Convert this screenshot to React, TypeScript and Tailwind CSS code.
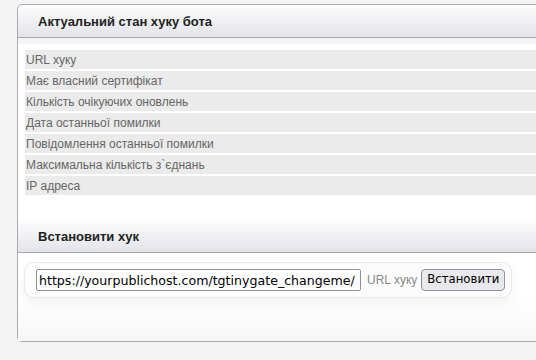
const rows = [
  'URL хуку',
  'Має власний сертифікат',
  'Кількість очікуючих оновлень',
  'Дата останньої помилки',
  'Повідомлення останньої помилки',
  'Максимальна кількість з`єднань',
  'IP адреса',
];

const headerClass =
  'flex h-[33px] items-center border-b border-[#a4a7af] bg-gradient-to-b from-[#fdfdfe] to-[#e3e4e8] pt-[1px] pl-[20px] text-[13px] font-bold text-[#222]';

export default function App() {
  return (
    <div className="h-[360px] w-[536px] overflow-hidden bg-[#f4f4f4] pt-[4px] pl-[17px] font-['Liberation_Sans',Arial,sans-serif]">
      <div className="flex h-[338px] w-[560px] flex-col rounded-[5px] border border-[#a9abb2] bg-white">
        <div className={`${headerClass} rounded-t-[5px]`}>Актуальний стан хуку бота</div>
        <div className="h-[6px] bg-[#f4f4f6]" />
        <div className="mt-[6px] ml-[7px] flex flex-col gap-[2px]">
          {rows.map((r) => (
            <div key={r} className="flex h-[19px] items-center bg-[#ebebeb] pl-[1px] text-[12px] text-[#666]">
              {r}
            </div>
          ))}
        </div>

        <div className={`mt-[25px] ${headerClass}`}>Встановити хук</div>

        <div className="flex-1 bg-gradient-to-b from-white via-white to-[#f7f7f7] pt-[9px] pl-[6px]">
          <div className="flex h-[36px] w-[488px] items-center whitespace-nowrap rounded-[10px] border border-[#e8e8e8] bg-[#fcfcfc] pl-[11px] shadow-[0_6px_14px_rgba(0,0,0,0.05)]">
            <input
              className="h-[22px] w-[325px] shrink-0 rounded-[2px] border border-[#8f8f9d] bg-white px-[2px] font-['DejaVu_Sans',sans-serif] text-[12.6px] text-black outline-none"
              defaultValue="https://yourpublichost.com/tgtinygate_changeme/"
              readOnly
            />
            <span className="ml-[6px] shrink-0 text-[12px] text-[#888]">URL хуку</span>
            <button className="ml-[4px] h-[22px] shrink-0 rounded-[4px] border border-[#8f8f9d] bg-[#e9e9ed] px-[5px] font-['DejaVu_Sans',sans-serif] text-[11.7px] text-black">
              Встановити
            </button>
          </div>
        </div>
      </div>
    </div>
  );
}
